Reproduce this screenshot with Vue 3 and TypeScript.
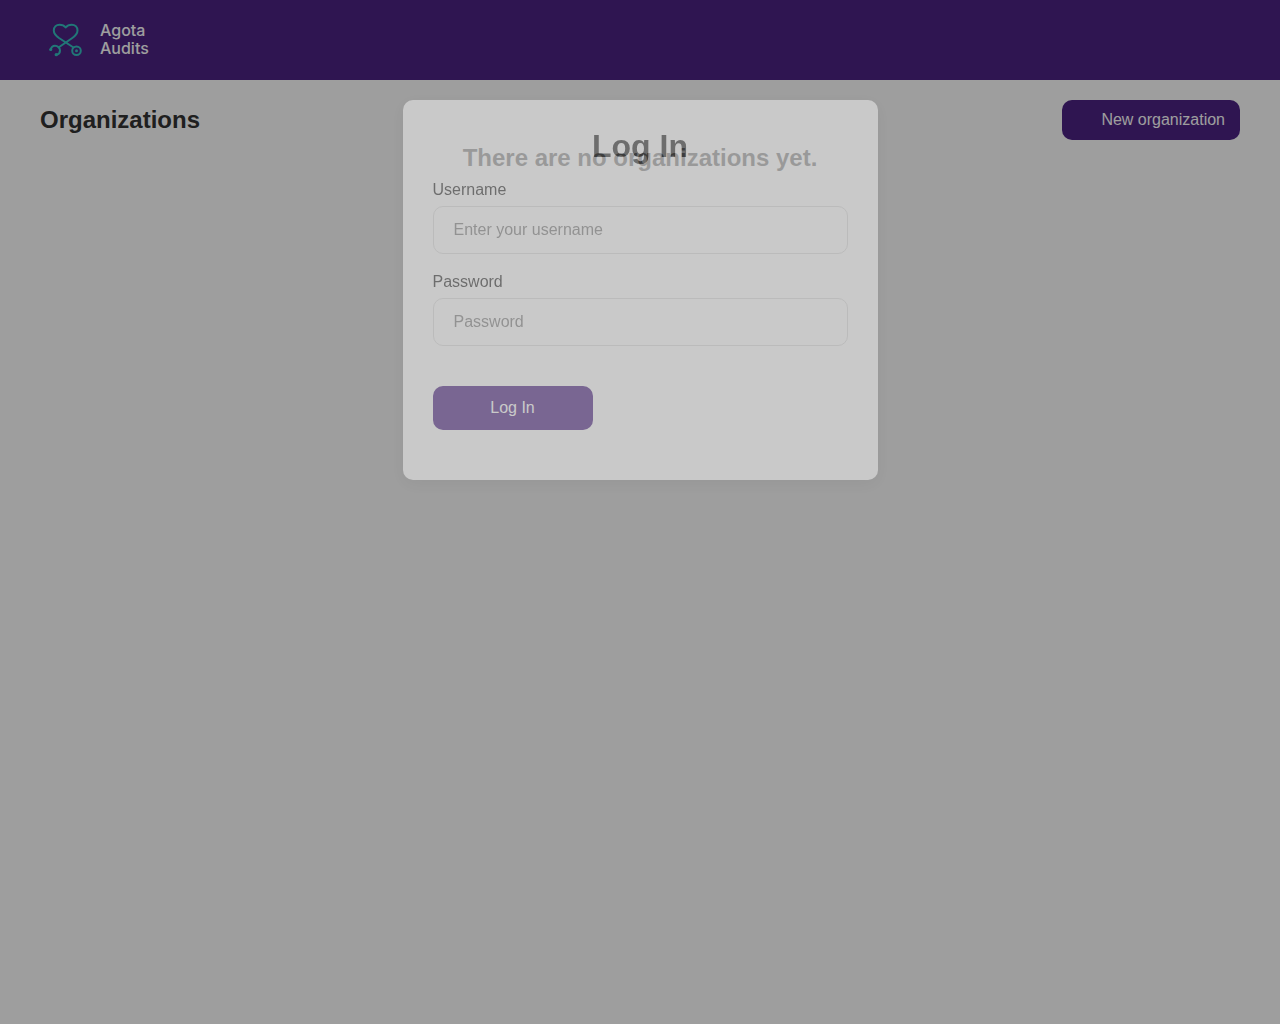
<script setup lang="ts">
import { ref } from 'vue'

const organizations = ref<string[]>([])
const username = ref('')
const password = ref('')
</script>

<template>
  <div class="page">
    <header class="topbar">
      <a class="brand" href="#">
        <svg class="logo" viewBox="0 0 44 44" fill="none" stroke-width="2" stroke-linecap="round" stroke-linejoin="round" aria-hidden="true">
          <path d="M29.500 29.500 15 20C11.500 17.500 9.800 15.500 9.800 12.500C9.800 9 12.400 6.700 15.600 6.700C18.300 6.700 20.300 7.700 21.700 9.500C23.100 7.700 25 6.700 27.700 6.700C31 6.700 33.500 9 33.500 12.500C33.500 15.500 31.800 17.500 28.300 20L14.500 29.500" />
          <path d="M6.800 31.500C7.300 29 9 27.700 11 27.700C13.800 27.700 16 30 16 32.500C16 34.500 14.800 36.200 12.600 36.800" />
          <circle cx="32.500" cy="32.700" r="4.300" />
          <circle class="dot" cx="32.500" cy="32.700" r="1.500" />
          <circle class="dot" cx="6.700" cy="31.500" r="1.600" />
          <circle class="dot" cx="12.200" cy="36.700" r="1.600" />
        </svg>
        <span class="brand-name">Agota<br />Audits</span>
      </a>
    </header>

    <main class="content">
      <div class="toolbar">
        <h1 class="title">Organizations</h1>
        <button class="new-button" type="button">New organization</button>
      </div>
      <h2 v-if="!organizations.length" class="empty">There are no organizations yet.</h2>
    </main>

    <div class="overlay"></div>
    <div class="modal">
      <form class="card" @submit.prevent>
        <h2 class="card-title">Log In</h2>
        <div class="field">
          <label for="username">Username</label>
          <input id="username" v-model="username" type="text" placeholder="Enter your username" />
        </div>
        <div class="field">
          <label for="password">Password</label>
          <input id="password" v-model="password" type="password" placeholder="Password" />
        </div>
        <button class="login-button" type="submit">Log In</button>
      </form>
    </div>
  </div>
</template>

<style>
body {
  margin: 0;
  background: #ffffff;
}
</style>

<style scoped>
.page {
  min-height: 100vh;
  font-family: "Liberation Sans", Arial, sans-serif;
  font-size: 16px;
  color: #333333;
}

h1,
h2 {
  margin: 0;
}

button,
input {
  box-sizing: border-box;
  font: inherit;
  border-radius: 10px;
}

.topbar {
  display: flex;
  align-items: center;
  height: 80px;
  padding: 0 40px;
  background: #4c2284;
}

.brand {
  display: flex;
  align-items: center;
  gap: 12px;
  padding-left: 4px;
  color: #ffffff;
  text-decoration: none;
}

.logo {
  width: 44px;
  height: 44px;
  stroke: #36c0c0;
}

.dot {
  fill: #36c0c0;
  stroke: none;
}

.brand-name {
  padding-bottom: 2px;
  font-family: Inter, "Open Sans", sans-serif;
  font-weight: 500;
  line-height: 18px;
}

.content {
  padding: 20px 40px;
}

.toolbar {
  display: flex;
  align-items: center;
  justify-content: space-between;
}

.title {
  font-size: 24px;
}

.new-button {
  height: 40px;
  padding: 0 15px 0 39px;
  border: 0;
  background: #4c2284;
  color: #ffffff;
}

.empty {
  font-size: 24px;
  line-height: 36px;
  text-align: center;
  color: #757575;
}

.overlay {
  position: fixed;
  inset: 0;
  background: rgba(0, 0, 0, 0.38);
}

.modal {
  position: fixed;
  inset: 0;
  display: flex;
  align-items: flex-start;
  justify-content: center;
  padding-top: 100px;
}

.card {
  box-sizing: border-box;
  width: 100%;
  max-width: 475px;
  padding: 30px 30px 50px;
  border-radius: 10px;
  background: #ffffff;
  box-shadow: 0 4px 16px rgba(0, 0, 0, 0.1);
  opacity: 0.45;
}

.card-title {
  margin-bottom: 18px;
  font-size: 32px;
  line-height: 32px;
  text-align: center;
}

.field {
  display: flex;
  flex-direction: column;
  gap: 6px;
  margin-bottom: 18px;
}

.field label {
  line-height: 20px;
}

.field input {
  height: 48px;
  padding: 0 20px;
  border: 1px solid #e0e0e0;
  background: transparent;
  color: #333333;
}

.field input::placeholder {
  color: #858585;
  opacity: 1;
}

.login-button {
  width: 160px;
  height: 44px;
  margin-top: 22px;
  border: 0;
  background: #4c2284;
  color: #ffffff;
}
</style>
